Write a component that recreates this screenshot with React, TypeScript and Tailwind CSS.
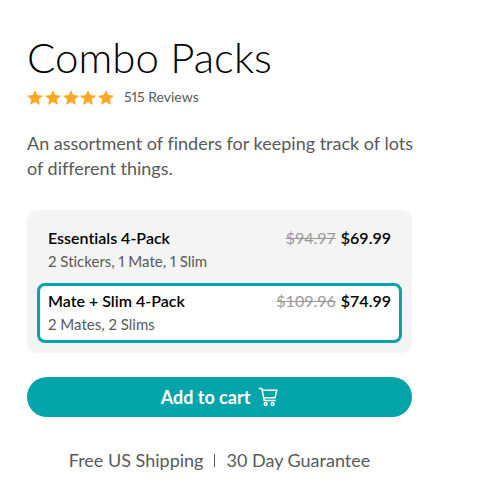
import React, { useState } from 'react';
import { clsx } from 'clsx';

interface Pack {
  id: string;
  name: string;
  contents: string;
  oldPrice: string;
  price: string;
}

const packs: Pack[] = [
  { id: 'essentials', name: 'Essentials 4-Pack', contents: '2 Stickers, 1 Mate, 1 Slim', oldPrice: '$94.97', price: '$69.99' },
  { id: 'mate-slim', name: 'Mate + Slim 4-Pack', contents: '2 Mates, 2 Slims', oldPrice: '$109.96', price: '$74.99' },
];

const Star = () => (
  <svg viewBox="1 0.8 16 15" className="h-[15px] w-4" fill="#ffa726" aria-hidden="true">
    <path d="M9 .8l2.3 5.1 5.7.6-4.3 3.8 1.3 5.5L9 12.9l-5 2.9 1.3-5.5L1 6.5l5.7-.6z" />
  </svg>
);

const CartIcon = () => (
  <svg viewBox="0 0 20 20" className="h-5 w-5" fill="none" stroke="currentColor" strokeWidth="1.5" aria-hidden="true">
    <path d="M.8 1.5h3l2.4 12h11.6M4.2 3.2h14.6l-1.8 7.6H5.8" />
    <circle cx="7.6" cy="17" r="1.4" />
    <circle cx="14.6" cy="17" r="1.4" />
  </svg>
);

interface PackOptionProps {
  pack: Pack;
  selected: boolean;
  onSelect: () => void;
}

const PackOption = ({ pack, selected, onSelect }: PackOptionProps) => (
  <label
    className={clsx(
      'relative block cursor-pointer rounded-lg border-3 px-2 pt-[3px] pb-1',
      selected ? 'border-[#03a4aa] bg-white' : 'border-transparent'
    )}
  >
    <input type="radio" name="pack" value={pack.id} checked={selected} onChange={onSelect} className="sr-only" />
    <span className="flex justify-between text-base leading-[23px] text-black">
      <span className="font-semibold">{pack.name}</span>
      <span className="flex gap-[5px]">
        <s className="text-[#999999]">{pack.oldPrice}</s>
        <span className="font-semibold">{pack.price}</span>
      </span>
    </span>
    <span className="mt-px block text-[15px] leading-[23px] text-[#58595b] proportional-nums">{pack.contents}</span>
  </label>
);

export default function App() {
  const [selectedId, setSelectedId] = useState('mate-slim');

  return (
    <main className="bg-white pt-[31px] pr-[71px] pb-7 pl-[27px] font-['Lato','Open_Sans',sans-serif] text-[#58595b] [font-variant-ligatures:none]">
      <h1 className="text-[42px] leading-[52px] font-light text-black">Combo Packs</h1>
      <div className="mt-1 flex items-center gap-[10px]">
        <div className="flex w-[87px] justify-between" role="img" aria-label="5 out of 5 stars">
          {[1, 2, 3, 4, 5].map((n) => (
            <Star key={n} />
          ))}
        </div>
        <span className="text-sm proportional-nums">515 Reviews</span>
      </div>
      <p className="mt-6 -mr-4 text-lg leading-[25px]">
        An assortment of finders for keeping track of lots of different things.
      </p>
      <div className="mt-[29px] flex flex-col gap-[3px] rounded-[10px] bg-[#f4f4f4] p-[10px]" role="radiogroup" aria-label="Pack">
        {packs.map((pack) => (
          <PackOption key={pack.id} pack={pack} selected={pack.id === selectedId} onSelect={() => setSelectedId(pack.id)} />
        ))}
      </div>
      <button
        type="button"
        className="mt-6 flex h-10 w-full items-center justify-center gap-2 rounded-full bg-[#03a4aa] text-lg font-bold text-white"
      >
        Add to cart
        <CartIcon />
      </button>
      <div className="mt-[30px] flex items-center justify-center gap-[11px] text-lg leading-[26px]">
        <span>Free US Shipping</span>
        <span className="h-[13px] w-px bg-[#58595b]" />
        <span>30 Day Guarantee</span>
      </div>
    </main>
  );
}
